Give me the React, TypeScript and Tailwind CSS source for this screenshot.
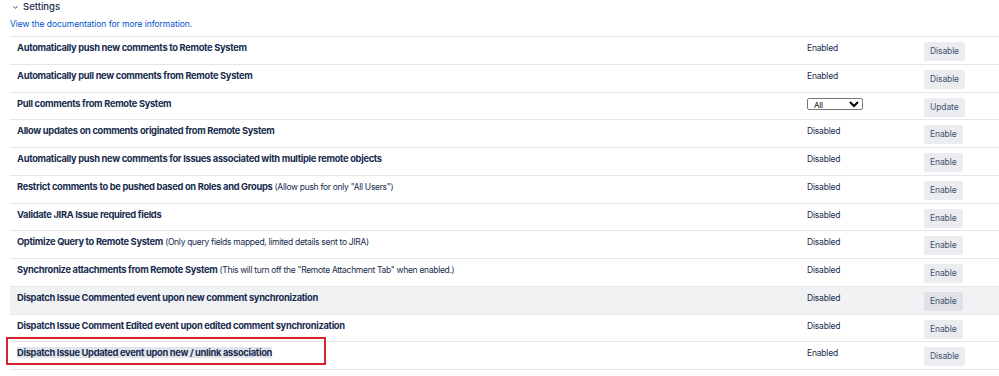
import { ChevronDown } from "lucide-react";

type Row = {
  label: string;
  note?: string;
  status?: string;
  action: string;
  select?: boolean;
  shaded?: boolean;
  marked?: boolean;
};

const rows: Row[] = [
  { label: "Automatically push new comments to Remote System", status: "Enabled", action: "Disable" },
  { label: "Automatically pull new comments from Remote System", status: "Enabled", action: "Disable" },
  { label: "Pull comments from Remote System", select: true, action: "Update" },
  { label: "Allow updates on comments originated from Remote System", status: "Disabled", action: "Enable" },
  { label: "Automatically push new comments for Issues associated with multiple remote objects", status: "Disabled", action: "Enable" },
  { label: "Restrict comments to be pushed based on Roles and Groups", note: '(Allow push for only "All Users")', status: "Disabled", action: "Enable" },
  { label: "Validate JIRA Issue required fields", status: "Disabled", action: "Enable" },
  { label: "Optimize Query to Remote System", note: "(Only query fields mapped, limited details sent to JIRA)", status: "Disabled", action: "Enable" },
  { label: "Synchronize attachments from Remote System", note: '(This will turn off the "Remote Attachment Tab" when enabled.)', status: "Disabled", action: "Enable" },
  { label: "Dispatch Issue Commented event upon new comment synchronization", status: "Disabled", action: "Enable", shaded: true },
  { label: "Dispatch Issue Comment Edited event upon edited comment synchronization", status: "Disabled", action: "Enable" },
  { label: "Dispatch Issue Updated event upon new / unlink association", status: "Enabled", action: "Disable", marked: true },
];

export default function App() {
  return (
    <div
      className="w-[999px] h-[376px] bg-white overflow-hidden text-[#172b4d]"
      style={{ fontFamily: "Inter, 'Noto Sans', sans-serif" }}
    >
      <div className="flex items-center pl-[12px] pt-[0px] h-[15px] text-[9.5px] font-medium">
        <ChevronDown className="w-[7px] h-[7px] mr-[4px]" strokeWidth={3} />
        <span>Settings</span>
      </div>
      <div className="pl-[10px] pt-[3px] h-[21px] text-[8.5px] tracking-[-0.05px] text-[#0052cc]">
        View the documentation for more information.
      </div>
      <div className="ml-[10px] border-t border-[#e4e6ea]">
        {rows.map((r, i) => (
          <div
            key={i}
            className={`relative flex h-[27.75px] border-b border-[#e4e6ea] ${r.shaded ? "bg-[#f1f2f4]" : ""}`}
          >
            <div className="w-[797px] pl-[7px] pt-[4px] text-[9.3px] leading-[14px]">
              {r.marked ? (
                <>
                  <span className="font-bold tracking-[-0.3px] bg-[#e2e4e9]">{r.label}</span>
                  <div className="absolute left-[-4px] top-[-5px] w-[320px] h-[28px] border-2 border-[#d3272d]" />
                </>
              ) : (
                <>
                  <span className="font-bold tracking-[-0.3px]">{r.label}</span>
                  {r.note && <span className="font-normal text-[8.5px] tracking-[-0.3px]"> {r.note}</span>}
                </>
              )}
            </div>
            <div className="w-[117px] pt-[4px] text-[8.5px] tracking-[-0.2px] leading-[14px]">
              {r.select ? (
                <select className="mt-[1px] w-[56px] h-[12px] text-[8px] leading-none border border-[#767676] rounded-[2px] px-[2px] text-black bg-white">
                  <option>All</option>
                </select>
              ) : (
                r.status
              )}
            </div>
            <div className="flex items-start pt-[5px]">
              <button
                className={`h-[19px] px-[6px] text-[8.5px] tracking-[-0.1px] text-[#42526e] rounded-[2px] ${r.shaded ? "bg-[#dfe1e6]" : "bg-[#ebecf0]"}`}
              >
                {r.action}
              </button>
            </div>
          </div>
        ))}
      </div>
    </div>
  );
}
